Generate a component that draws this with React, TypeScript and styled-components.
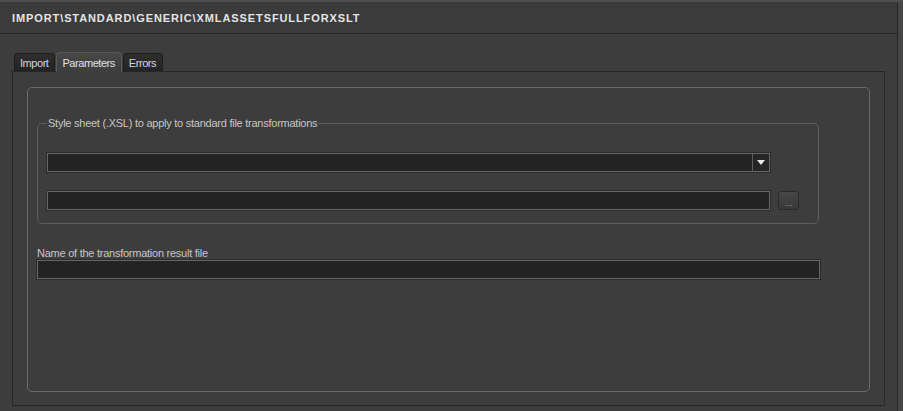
import styled, { createGlobalStyle } from 'styled-components'

const GlobalStyle = createGlobalStyle`
  html, body {
    margin: 0;
    padding: 0;
    background: #3d3d3d;
  }
  body {
    font-family: "Liberation Sans", Arial, sans-serif;
  }
`

const Frame = styled.div`
  width: 903px;
  height: 411px;
  display: flex;
  background: #3d3d3d;
  border-top: 2px solid #4e4e4e;
  box-sizing: border-box;
  overflow: hidden;
`

const Main = styled.div`
  flex: 1;
  display: flex;
  flex-direction: column;
  min-width: 0;
`

const RightStrip = styled.div`
  width: 5px;
  border-left: 1px solid #262626;
  background: #454545;
`

const Header = styled.div`
  height: 31px;
  display: flex;
  align-items: center;
  padding-left: 12px;
  background: #3b3b3b;
  border-bottom: 1px solid #262626;
  flex-shrink: 0;
`

const Title = styled.h1`
  margin: 0;
  font-size: 11px;
  font-weight: 700;
  letter-spacing: 0.9px;
  color: #e4e4e4;
  text-transform: uppercase;
`

const Body = styled.div`
  flex: 1;
  display: flex;
  flex-direction: column;
  padding: 17px 12px 5px 12px;
  border-left: 2px solid #363636;
  margin-left: -2px;
`

const TabRow = styled.div`
  display: flex;
  align-items: flex-end;
  gap: 1px;
  padding-left: 2px;
  height: 20px;
`

const Tab = styled.div<{ $active?: boolean }>`
  box-sizing: border-box;
  height: ${({ $active }) => ($active ? '20px' : '18px')};
  padding: 0 6px 0 5px;
  display: flex;
  align-items: center;
  font-size: 11px;
  letter-spacing: -0.45px;
  color: ${({ $active }) => ($active ? '#e0e0e0' : '#d4d4d4')};
  border-radius: 4px 4px 0 0;
  background: ${({ $active }) =>
    $active ? 'linear-gradient(#474747, #3e3e3e)' : 'linear-gradient(#2e2e2e, #232323)'};
  border: 1px solid ${({ $active }) => ($active ? '#585858' : '#1e1e1e')};
  border-bottom: none;
  margin-bottom: ${({ $active }) => ($active ? '-1px' : '0')};
  position: relative;
  z-index: ${({ $active }) => ($active ? 1 : 0)};
`

const Panel = styled.div`
  flex: 1;
  display: flex;
  flex-direction: column;
  border: 1px solid #262626;
  border-right-color: #2a2a2a;
  padding: 15px 14px 13px 14px;
`

const GroupBox = styled.div`
  flex: 1;
  border: 1px solid #6a6a6a;
  border-radius: 5px;
  padding: 29px 50px 0 9px;
  display: flex;
  flex-direction: column;
`

const Fieldset = styled.fieldset`
  margin: 0;
  min-width: 0;
  border: 1px solid #5e5e5e;
  border-radius: 5px;
  padding: 23px 0 13px 9px;
  display: flex;
  flex-direction: column;
  gap: 19px;
`

const Legend = styled.legend`
  font-size: 11px;
  color: #c6c6c6;
  padding: 0 1px;
  line-height: 13px;
  letter-spacing: -0.25px;
`

const FieldRow = styled.div`
  display: flex;
  align-items: center;
  gap: 8px;
`

const Combo = styled.div`
  width: 723px;
  height: 19px;
  box-sizing: border-box;
  display: flex;
  background: #232323;
  border: 1px solid #666;
  box-shadow: 0 0 0 1px #2c2c2c;
`

const ComboText = styled.div`
  flex: 1;
`

const ComboButton = styled.div`
  width: 16px;
  border-left: 1px solid #5e5e5e;
  display: flex;
  align-items: center;
  justify-content: center;
  background: #262626;
`

const TextInput = styled.div<{ $width: number }>`
  width: ${({ $width }) => $width}px;
  height: 19px;
  box-sizing: border-box;
  background: #232323;
  border: 1px solid #666;
  box-shadow: 0 0 0 1px #2c2c2c;
`

const BrowseButton = styled.div`
  width: 21px;
  height: 19px;
  box-sizing: border-box;
  border: 1px solid #2a2a2a;
  border-radius: 3px;
  background: linear-gradient(#474747, #393939);
  color: #9a9a9a;
  font-size: 9px;
  display: flex;
  align-items: flex-end;
  justify-content: center;
  padding-bottom: 2px;
  line-height: 8px;
`

const Label = styled.div`
  margin-top: 23px;
  font-size: 11px;
  color: #c6c6c6;
  line-height: 13px;
  letter-spacing: -0.25px;
`

export default function App() {
  return (
    <>
      <GlobalStyle />
      <Frame>
        <Main>
          <Header>
            <Title>IMPORT\STANDARD\GENERIC\XMLASSETSFULLFORXSLT</Title>
          </Header>
          <Body>
            <TabRow>
              <Tab>Import</Tab>
              <Tab $active>Parameters</Tab>
              <Tab>Errors</Tab>
            </TabRow>
            <Panel>
              <GroupBox>
                <Fieldset>
                  <Legend>Style sheet (.XSL) to apply to standard file transformations</Legend>
                  <Combo>
                    <ComboText />
                    <ComboButton>
                      <svg width="8" height="5" viewBox="0 0 8 5">
                        <path d="M0 0 H8 L4 5 Z" fill="#e8e8e8" />
                      </svg>
                    </ComboButton>
                  </Combo>
                  <FieldRow>
                    <TextInput $width={723} />
                    <BrowseButton>...</BrowseButton>
                  </FieldRow>
                </Fieldset>
                <Label>Name of the transformation result file</Label>
                <TextInput $width={783} />
              </GroupBox>
            </Panel>
          </Body>
        </Main>
        <RightStrip />
      </Frame>
    </>
  )
}
